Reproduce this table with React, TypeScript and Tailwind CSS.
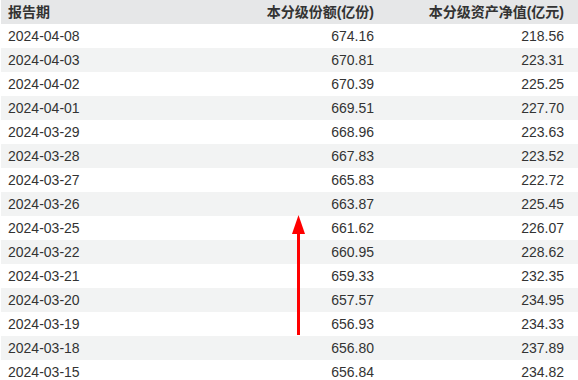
const rows: [string, string, string][] = [
  ['2024-04-08', '674.16', '218.56'],
  ['2024-04-03', '670.81', '223.31'],
  ['2024-04-02', '670.39', '225.25'],
  ['2024-04-01', '669.51', '227.70'],
  ['2024-03-29', '668.96', '223.63'],
  ['2024-03-28', '667.83', '223.52'],
  ['2024-03-27', '665.83', '222.72'],
  ['2024-03-26', '663.87', '225.45'],
  ['2024-03-25', '661.62', '226.07'],
  ['2024-03-22', '660.95', '228.62'],
  ['2024-03-21', '659.33', '232.35'],
  ['2024-03-20', '657.57', '234.95'],
  ['2024-03-19', '656.93', '234.33'],
  ['2024-03-18', '656.80', '237.89'],
  ['2024-03-15', '656.84', '234.82'],
];

export default function App() {
  return (
    <div className="relative w-[578px] h-[380px] overflow-hidden bg-white pl-px text-[14px] text-[#333] font-['Liberation_Sans',Arial,'Noto_Sans_CJK_SC',sans-serif]">
      <div className="grid grid-cols-[1fr_190px_190px] h-6 items-center bg-[#e6e7e8] font-bold">
        <div className="pl-[7px]">报告期</div>
        <div className="pr-[14px] text-right">本分级份额(亿份)</div>
        <div className="pr-[14px] text-right">本分级资产净值(亿元)</div>
      </div>
      {rows.map(([d, a, b], i) => (
        <div
          key={d}
          className={`grid grid-cols-[1fr_190px_190px] h-6 items-center ${i % 2 === 1 ? 'bg-[#f2f3f3]' : 'bg-white'}`}
        >
          <div className="pl-[7px]">{d}</div>
          <div className="pr-[14px] text-right">{a}</div>
          <div className="pr-[14px] text-right">{b}</div>
        </div>
      ))}
      <svg className="absolute left-0 top-0 pointer-events-none" width="578" height="380">
        <line x1="298.5" y1="230" x2="298.5" y2="335" stroke="#ff0000" strokeWidth="3" />
        <polygon points="298.5,215 292,234 305,234" fill="#ff0000" />
      </svg>
    </div>
  );
}
